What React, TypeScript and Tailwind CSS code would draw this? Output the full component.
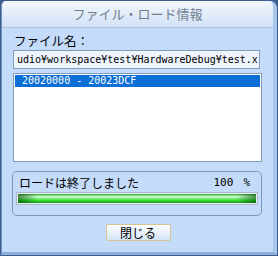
import React from "react";

export default function App() {
  const jp = { fontFamily: '"Noto Sans CJK JP", "Noto Sans", sans-serif' };
  const mono = { fontFamily: '"DejaVu Sans Mono", "Liberation Mono", monospace' };
  return (
    <div className="w-[278px] h-[256px] overflow-hidden bg-[#3d5f90] p-[1px] pb-[1px]">
      <div className="w-full h-full flex flex-col rounded-tl-[5px] rounded-tr-[7px] bg-[#c4dbf9] border-l border-[#6f8fbf] border-r-[4px] border-r-[#a9c6ec] border-b-[3px] border-b-[#8eaedb] overflow-hidden">
        <div className="h-[27px] shrink-0 flex items-center justify-center bg-gradient-to-b from-[#f3f7fd] to-[#d2e2f7] border-b border-[#aac5e8]">
          <span className="text-[13px] text-[#717e8e]" style={jp}>
            ファイル・ロード情報
          </span>
        </div>
        <div className="flex flex-col pl-[10px] pr-[11px] pt-[5px]">
          <div className="h-[15px] leading-[15px] pl-[2px] text-[12.5px] text-black" style={jp}>
            ファイル名：
          </div>
          <div className="mt-[2px] ml-[1px] mr-[2px] h-[19px] border border-[#7f9db9] bg-[#eef4fc] overflow-hidden whitespace-nowrap pl-[3px] text-[10px] leading-[17px] text-black" style={mono}>
            udio¥workspace¥test¥HardwareDebug¥test.x
          </div>
          <div className="mt-[4px] ml-[1px] h-[89px] border border-[#7f9db9] bg-white p-[1px]">
            <div className="h-[12px] bg-[#0b6fd6] text-white text-[10px] leading-[12px] pl-[7px] whitespace-nowrap" style={mono}>
              20020000 - 20023DCF
            </div>
          </div>
          <div className="mt-[9px] h-[45px] rounded-[5px] border border-[#7c98c2] px-[3px] pt-[3px] flex flex-col">
            <div className="h-[15px] flex items-center justify-between pl-[3px] pr-[8px] text-[12px] text-black leading-[15px]">
              <span style={jp}>ロードは終了しました</span>
              <span className="flex gap-[10px] text-[11px]" style={mono}>
                <span>100</span>
                <span>%</span>
              </span>
            </div>
            <div className="mt-[2px] h-[13px] border border-[#a9b8c8] p-[1px] bg-[#e8eef5]">
              <div className="relative w-full h-full bg-[linear-gradient(to_bottom,#2aa82a_0%,#d4fbd4_30%,#7cf07c_50%,#36dc36_72%,#1a9a1a_100%)]">
                <div className="absolute inset-0 bg-[linear-gradient(to_right,rgba(0,70,0,0.6)_0%,rgba(0,0,0,0)_8%,rgba(0,0,0,0)_92%,rgba(0,70,0,0.6)_100%)]" />
              </div>
            </div>
          </div>
          <div className="mt-[8px] flex justify-center pl-[2px]">
            <div className="w-[65px] h-[17px] rounded-[2px] border border-[#d8c690] bg-gradient-to-b from-[#fdfeff] to-[#d5e4f6] flex items-center justify-center text-[12px] text-black" style={jp}>
              閉じる
            </div>
          </div>
        </div>
      </div>
    </div>
  );
}
